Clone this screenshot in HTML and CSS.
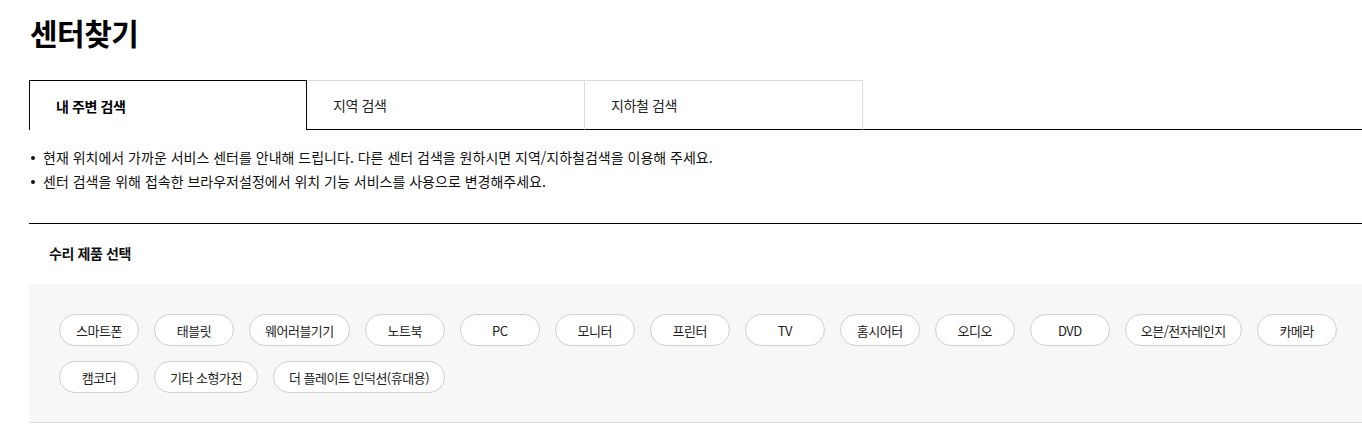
FILE: index.html
```html
<!DOCTYPE html>
<html lang="ko">
<head>
<meta charset="utf-8">
<title>센터찾기</title>
<link rel="stylesheet" href="styles.css">
</head>
<body>
<div class="page">
  <h1 class="title">센터찾기</h1>
  <div class="tabs">
    <div class="tab active">내 주변 검색</div>
    <div class="tab">지역 검색</div>
    <div class="tab">지하철 검색</div>
    <div class="tab-fill"></div>
  </div>
  <ul class="notes">
    <li>현재 위치에서 가까운 서비스 센터를 안내해 드립니다. 다른 센터 검색을 원하시면 지역/지하철검색을 이용해 주세요.</li>
    <li>센터 검색을 위해 접속한 브라우저설정에서 위치 기능 서비스를 사용으로 변경해주세요.</li>
  </ul>
  <div class="section">
    <h2 class="section-title">수리 제품 선택</h2>
    <div class="chips-box">
      <div class="chips">
        <span class="chip">스마트폰</span>
        <span class="chip">태블릿</span>
        <span class="chip">웨어러블기기</span>
        <span class="chip">노트북</span>
        <span class="chip">PC</span>
        <span class="chip">모니터</span>
        <span class="chip">프린터</span>
        <span class="chip">TV</span>
        <span class="chip">홈시어터</span>
        <span class="chip">오디오</span>
        <span class="chip">DVD</span>
        <span class="chip">오븐/전자레인지</span>
        <span class="chip">카메라</span>
        <span class="chip">캠코더</span>
        <span class="chip">기타 소형가전</span>
        <span class="chip">더 플레이트 인덕션(휴대용)</span>
      </div>
    </div>
  </div>
</div>
</body>
</html>
```

FILE: styles.css
```css
html, body {
  margin: 0;
  padding: 0;
  overflow: hidden;
  background: #fff;
}
body {
  font-family: "Noto Sans CJK KR", "Noto Sans", sans-serif;
  color: #111;
}
.page {
  width: 1390px;
  margin-left: 29px;
  padding-top: 12px;
}
.title {
  margin: 0 0 0 1px;
  font-size: 30px;
  line-height: 40px;
  font-weight: 700;
  color: #000;
  letter-spacing: -0.5px;
}
.tabs {
  display: flex;
  margin-top: 28px;
  height: 50px;
}
.tab {
  box-sizing: border-box;
  width: 278px;
  height: 50px;
  padding-left: 26px;
  display: flex;
  align-items: center;
  font-size: 14px;
  color: #222;
  border-top: 1px solid #ddd;
  border-right: 1px solid #ddd;
  border-bottom: 1px solid #000;
  letter-spacing: -0.4px;
}
.tab.active {
  border: 1px solid #000;
  border-bottom: 0;
  font-weight: 700;
  color: #000;
}
.tab-fill {
  flex: 1;
  border-bottom: 1px solid #000;
}
.notes {
  list-style: none;
  margin: 15px 0 0;
  padding: 0;
}
.notes li {
  position: relative;
  padding-left: 14px;
  font-size: 14px;
  line-height: 24px;
  color: #111;
  letter-spacing: 0;
}
.notes li::before {
  content: "";
  position: absolute;
  left: 2px;
  top: 11px;
  width: 4px;
  height: 4px;
  border-radius: 50%;
  background: #111;
}
.section {
  margin-top: 30px;
  border-top: 1px solid #000;
}
.section-title {
  margin: 0;
  padding: 18px 0 0 20px;
  height: 42px;
  box-sizing: content-box;
  font-size: 14px;
  line-height: 22px;
  font-weight: 700;
  color: #111;
  letter-spacing: -0.4px;
}
.chips-box {
  background: #f7f7f7;
  border-bottom: 1px solid #ddd;
  padding: 30px 30px 29px;
}
.chips {
  display: flex;
  flex-wrap: wrap;
  gap: 15px;
}
.chip {
  box-sizing: border-box;
  min-width: 80px;
  height: 32px;
  padding: 0 15px;
  display: flex;
  align-items: center;
  justify-content: center;
  background: #fff;
  border: 1px solid #d0d0d0;
  border-radius: 16px;
  font-size: 13px;
  color: #222;
  letter-spacing: -0.5px;
  white-space: nowrap;
}
```
